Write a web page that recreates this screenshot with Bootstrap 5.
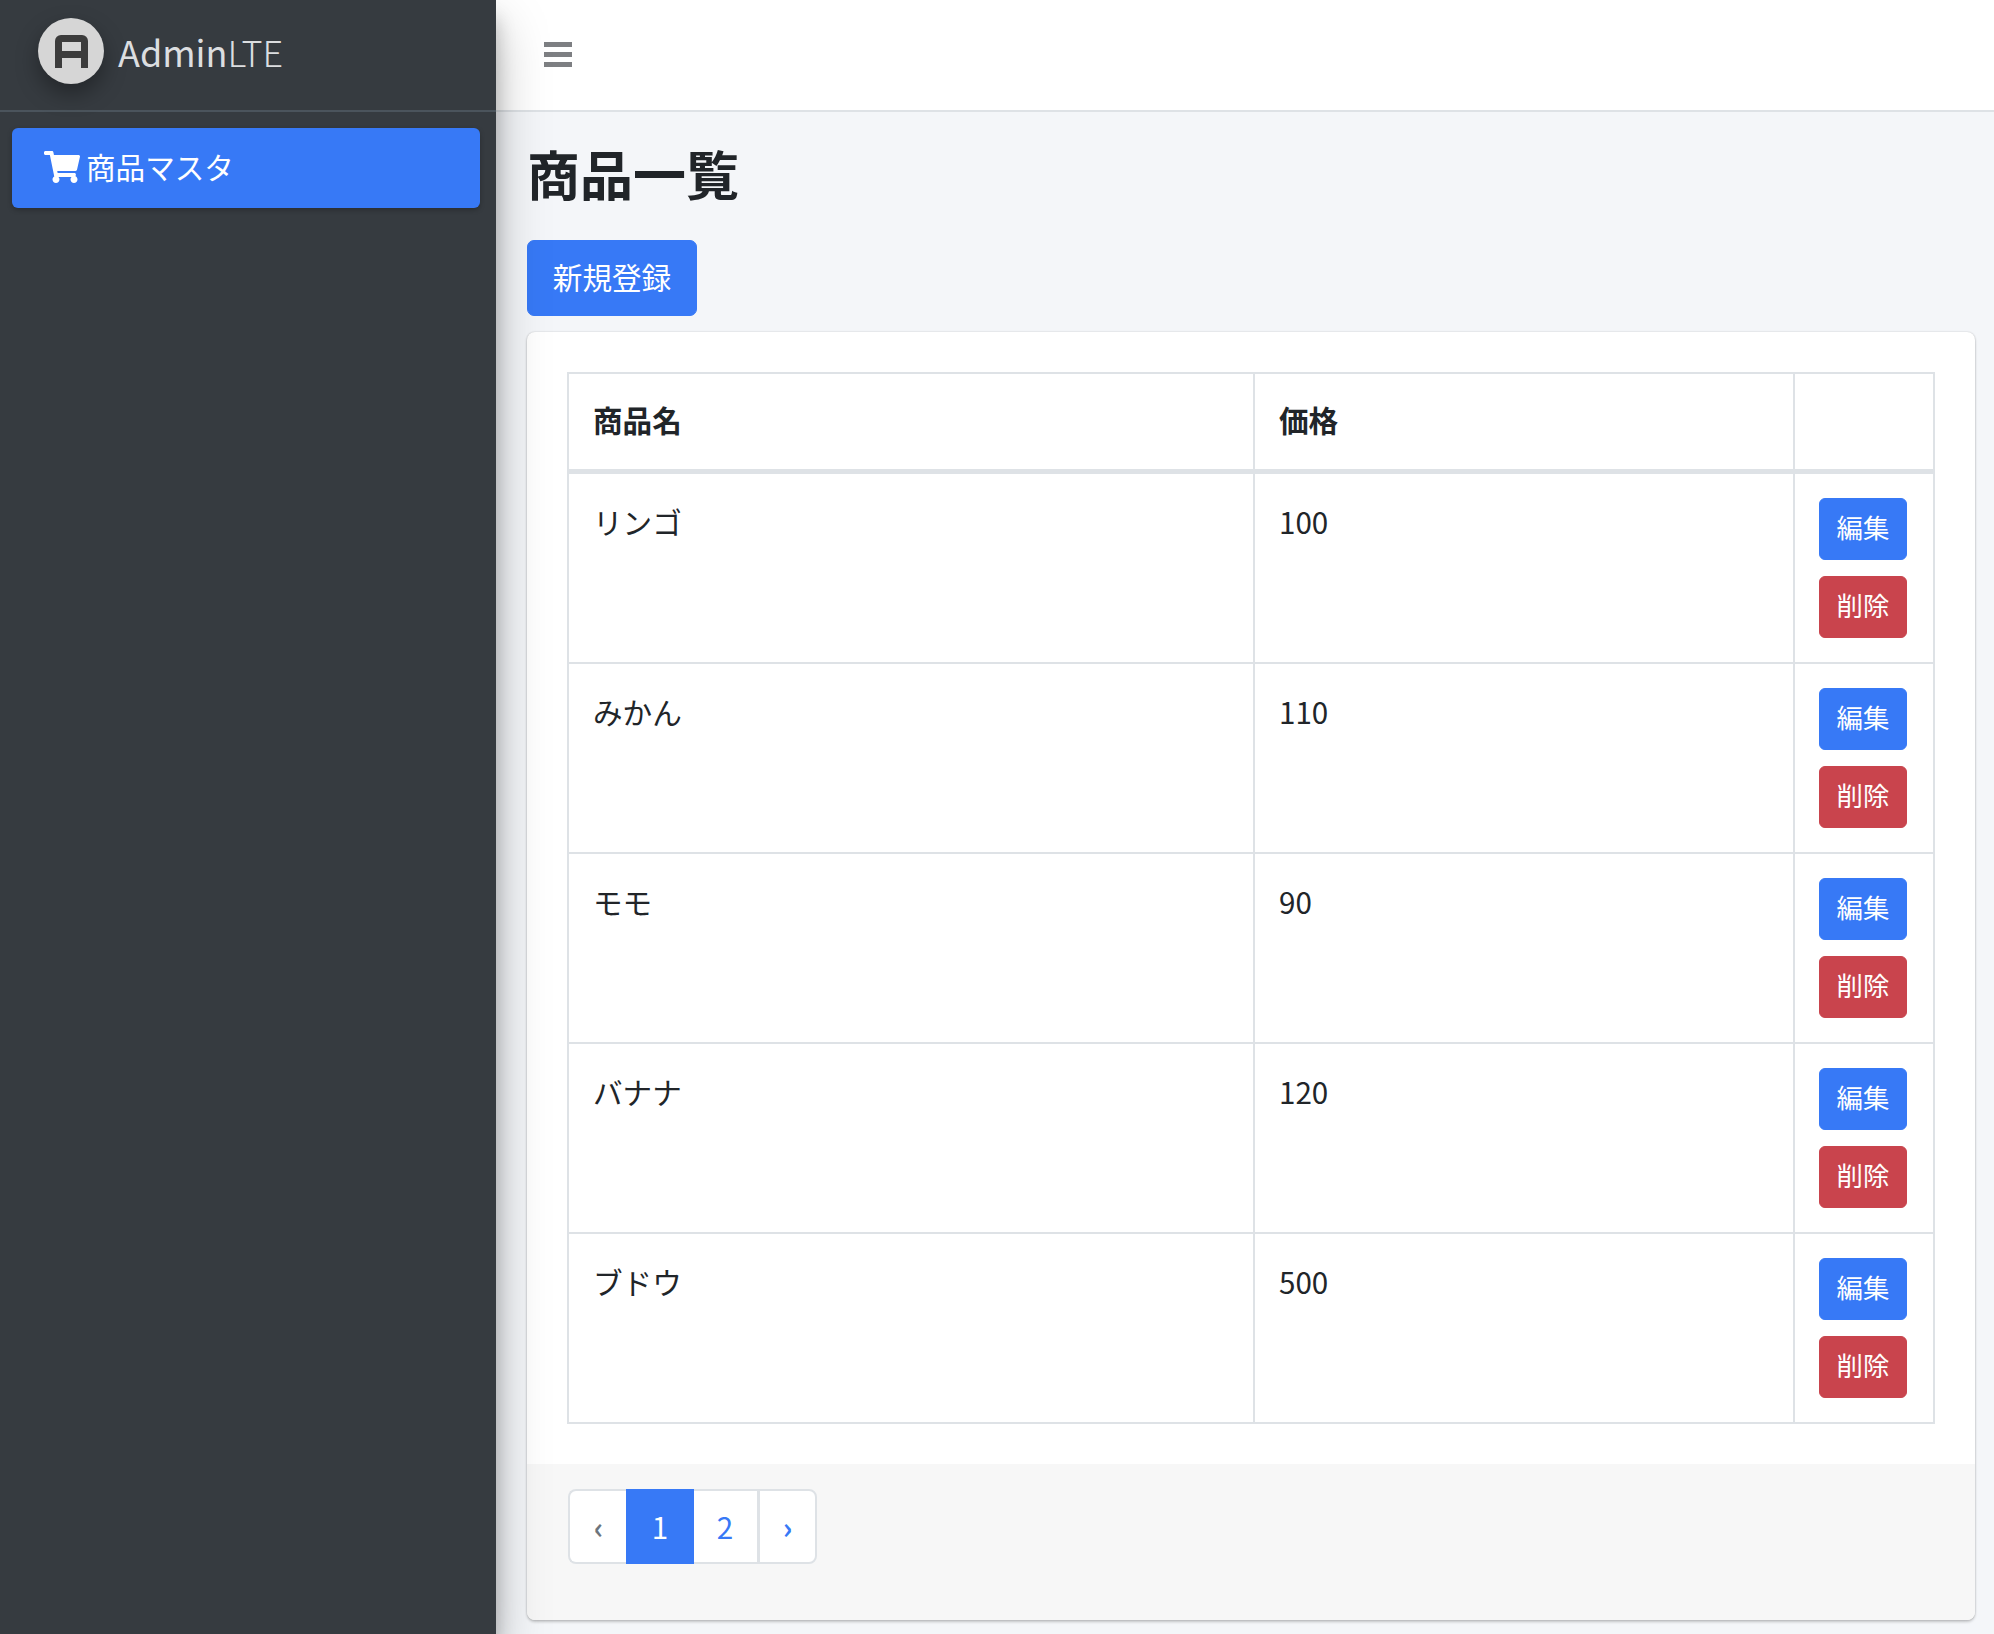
<!DOCTYPE html>
<html lang="ja">
<head>
  <meta charset="UTF-8">
  <meta name="viewport" content="width=device-width, initial-scale=1.0">
  <title>商品一覧</title>
  <link href="https://cdn.jsdelivr.net/npm/bootstrap@5.3.3/dist/css/bootstrap.min.css" rel="stylesheet">
  <style>
    :root {
      --brand-blue: #3779f6;
      --brand-red: #c9444d;
      --line-color: #dee2e6;
    }

    html, body {
      height: 100%;
      overflow: hidden;
    }

    body {
      font-family: "Noto Sans CJK JP", "Noto Sans", sans-serif;
      font-size: 29.6px;
      line-height: 1.5;
      color: #212529;
      background-color: #f4f6f9;
    }

    .app-sidebar {
      width: 496px;
      flex: 0 0 496px;
      background-color: #363b40;
      box-shadow: 0 25px 50px rgba(0, 0, 0, .25), 0 18px 18px rgba(0, 0, 0, .22);
      position: relative;
      z-index: 2;
    }

    .app-brand {
      height: 112px;
      padding: 18px 0 0 38px;
      border-bottom: 2px solid #4b545c;
      gap: 14px;
    }

    .brand-logo {
      width: 66px;
      height: 66px;
      border-radius: 50%;
      background-color: #d6d6d6;
      box-shadow: 0 10px 22px rgba(0, 0, 0, .35);
      flex: none;
    }

    .brand-text {
      font-size: 36px;
      color: #dcdee0;
      line-height: 67px;
      font-weight: 400;
    }

    .brand-light {
      font-weight: 300;
    }

    .side-link {
      margin: 16px 16px 0 12px;
      height: 80px;
      padding: 0 0 2px 32px;
      gap: 6px;
      border-radius: 6px;
      background-color: var(--brand-blue);
      color: #fff;
      text-decoration: none;
      box-shadow: 0 2px 5px rgba(0, 0, 0, .25);
    }

    .side-link svg {
      width: 36px;
      height: 32px;
      fill: #fff;
    }

    .app-topbar {
      height: 112px;
      padding: 0 0 2px 48px;
      background-color: #fff;
      border-bottom: 2px solid var(--line-color);
    }

    .menu-bars {
      width: 28px;
      height: 25px;
    }

    .menu-bars span {
      height: 5px;
      background-color: #7d7f82;
    }

    .app-content {
      padding: 0 19px 0 31px;
    }

    .page-title {
      font-size: 53px;
      font-weight: 700;
      line-height: 78px;
      margin: 22px 0 28px;
    }

    .btn-add {
      width: 170px;
      height: 76px;
      font-size: 29.6px;
      padding: 0 0 2px;
      background-color: var(--brand-blue);
      border-color: var(--brand-blue);
      border-radius: 7px;
    }

    .list-card {
      margin-top: 16px;
      border: 0;
      border-radius: 8px;
      box-shadow: 0 0 2px rgba(0, 0, 0, .2), 0 2px 3px rgba(0, 0, 0, .2);
    }

    .list-card .card-body {
      padding: 40px;
    }

    .item-table {
      table-layout: fixed;
      margin: 0;
      border: 0;
    }

    .item-table > :not(caption) > * {
      border-width: 0;
    }

    .item-table > :not(caption) > * > * {
      padding: 26px 24px 24px;
      border: 2px solid var(--line-color);
      color: #212529;
    }

    .item-table thead th {
      height: 98px;
      padding-top: 22px;
      vertical-align: middle;
      font-weight: 700;
      border-bottom-width: 5px;
    }

    .item-table tbody td {
      height: 190px;
    }

    .item-table tbody td:last-child {
      padding-top: 24px;
    }

    .item-table > :not(:first-child) {
      border-top: 0;
    }

    .col-name { width: 686px; }
    .col-price { width: 540px; }

    .row-btn {
      width: 88px;
      height: 62px;
      padding: 0 0 3px;
      font-size: 26.4px;
      border-radius: 6px;
      color: #fff;
    }

    .row-btn-edit {
      background-color: var(--brand-blue);
      border-color: var(--brand-blue);
    }

    .row-btn-del {
      background-color: var(--brand-red);
      border-color: var(--brand-red);
    }

    .list-card .card-footer {
      height: 156px;
      padding: 25px 41px 0;
      background-color: #f7f7f7;
      border: 0;
      border-radius: 0 0 8px 8px;
    }

    .pager {
      --bs-pagination-border-color: var(--line-color);
      --bs-pagination-border-width: 2px;
      --bs-pagination-border-radius: 8px;
      --bs-pagination-color: var(--brand-blue);
      --bs-pagination-active-bg: var(--brand-blue);
      --bs-pagination-active-border-color: var(--brand-blue);
      --bs-pagination-disabled-color: #6c757d;
      --bs-pagination-disabled-bg: #fff;
      --bs-pagination-disabled-border-color: var(--line-color);
      --bs-pagination-font-size: 29.6px;
    }

    .pager .page-link {
      height: 75px;
      padding: 0;
      line-height: 71px;
      text-align: center;
    }

    .pager-prev .page-link { width: 59px; border-right: 0; font-weight: 700; }
    .pager-one .page-link { width: 68px; margin-left: 0; }
    .pager-two .page-link { width: 66px; margin-left: 0; border-left: 0; }
    .pager-next .page-link { width: 59px; font-weight: 700; }
  </style>
</head>
<body>
  <div class="d-flex h-100">
    <!-- Sidebar -->
    <aside class="app-sidebar">
      <div class="app-brand d-flex">
        <div class="brand-logo d-flex align-items-center justify-content-center">
          <svg width="33" height="33" viewBox="0 0 33 33" aria-hidden="true">
            <path fill="#3c3c3c" fill-rule="evenodd" d="M6 0h21a6 6 0 0 1 6 6v27h-7V23H7v10H0V6a6 6 0 0 1 6-6zM7 7v9h19V7z"/>
          </svg>
        </div>
        <span class="brand-text">Admin<span class="brand-light">LTE</span></span>
      </div>
      <a class="side-link d-flex align-items-center" href="#">
        <svg viewBox="0 0 576 512" aria-hidden="true">
          <path d="M528.12 301.319l47.273-208C578.806 78.301 567.391 64 551.99 64H159.208l-9.166-44.81C147.758 8.021 137.93 0 126.529 0H24C10.745 0 0 10.745 0 24v16c0 13.255 10.745 24 24 24h69.883l70.248 343.435C147.325 417.1 136 435.222 136 456c0 30.928 25.072 56 56 56s56-25.072 56-56c0-15.674-6.447-29.835-16.824-40h209.647C430.447 426.165 424 440.326 424 456c0 30.928 25.072 56 56 56s56-25.072 56-56c0-22.172-12.888-41.332-31.579-50.405l5.517-24.276c3.413-15.018-8.002-29.319-23.403-29.319H218.117l-6.545-32h293.145c11.206 0 20.92-7.754 23.403-18.681z"/>
        </svg>
        <span>商品マスタ</span>
      </a>
    </aside>

    <!-- Main -->
    <div class="flex-grow-1 d-flex flex-column">
      <nav class="app-topbar d-flex align-items-center">
        <div class="menu-bars d-flex flex-column justify-content-between">
          <span></span><span></span><span></span>
        </div>
      </nav>

      <main class="app-content">
        <h1 class="page-title">商品一覧</h1>
        <a href="#" class="btn btn-primary btn-add d-flex align-items-center justify-content-center">新規登録</a>

        <div class="card list-card">
          <div class="card-body">
            <table class="table item-table">
              <colgroup>
                <col class="col-name">
                <col class="col-price">
                <col>
              </colgroup>
              <thead>
                <tr><th>商品名</th><th>価格</th><th></th></tr>
              </thead>
              <tbody id="itemRows"></tbody>
            </table>
          </div>
          <div class="card-footer">
            <ul class="pagination pager mb-0">
              <li class="page-item disabled pager-prev"><span class="page-link">‹</span></li>
              <li class="page-item active pager-one"><span class="page-link">1</span></li>
              <li class="page-item pager-two"><a class="page-link" href="#">2</a></li>
              <li class="page-item pager-next"><a class="page-link" href="#">›</a></li>
            </ul>
          </div>
        </div>
      </main>
    </div>
  </div>

  <script src="https://cdn.jsdelivr.net/npm/bootstrap@5.3.3/dist/js/bootstrap.bundle.min.js"></script>
  <script>
    // Table rows
    const items = [
      ['リンゴ', 100],
      ['みかん', 110],
      ['モモ', 90],
      ['バナナ', 120],
      ['ブドウ', 500]
    ];

    document.getElementById('itemRows').innerHTML = items.map(function (item) {
      return '<tr><td>' + item[0] + '</td><td>' + item[1] + '</td><td>' +
        '<div class="d-flex flex-column gap-3">' +
        '<a href="#" class="btn row-btn row-btn-edit d-flex align-items-center justify-content-center">編集</a>' +
        '<a href="#" class="btn row-btn row-btn-del d-flex align-items-center justify-content-center">削除</a>' +
        '</div></td></tr>';
    }).join('');
  </script>
</body>
</html>
